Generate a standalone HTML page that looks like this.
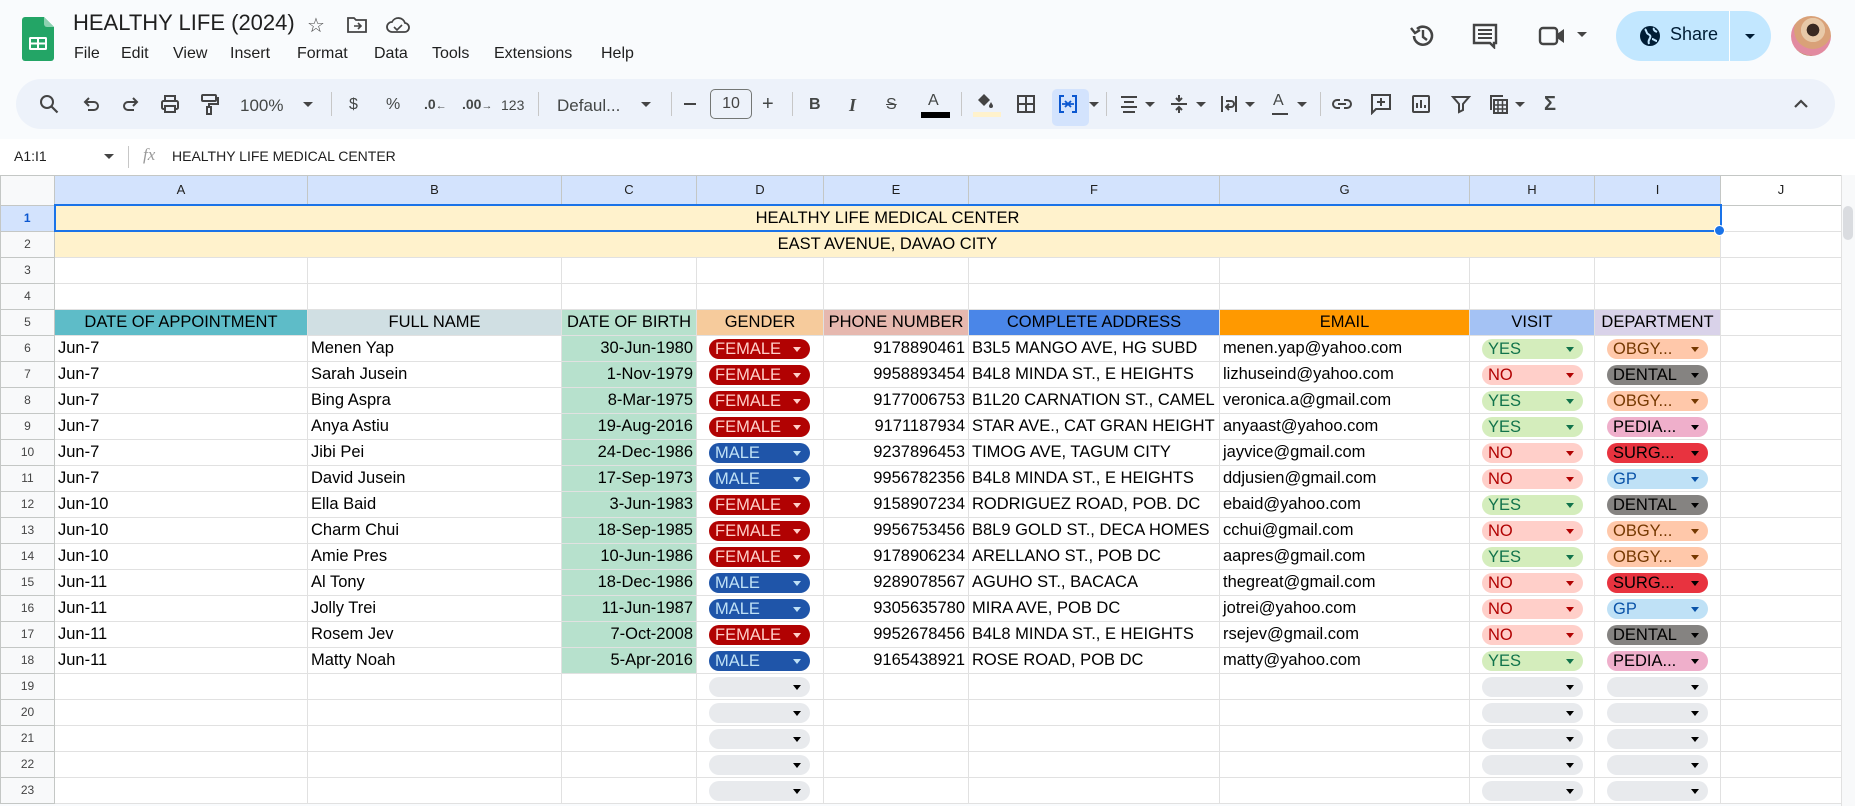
<!DOCTYPE html>
<html><head><meta charset="utf-8">
<style>
*{box-sizing:border-box;margin:0;padding:0}
body{width:1855px;height:806px;overflow:hidden;background:#f9fbfd;font-family:"Liberation Sans",Arial,sans-serif;position:relative;color:#1f1f1f}
.abs{position:absolute}
.title{left:73px;top:10px;font-size:22px;color:#1f1f1f}
.menu{top:45px;font-size:16px;color:#1f1f1f}
.tb{left:16px;top:79px;width:1819px;height:50px;background:#edf2fa;border-radius:25px}
.ti{position:absolute;top:93px;width:22px;height:22px}
.tt{position:absolute;top:94px;font-size:16px;color:#444746}
.sep{position:absolute;top:92px;width:1px;height:24px;background:#c7c7c7}
.fb{left:0;top:139px;width:1855px;height:36px;background:#fff}
table{position:absolute;left:0;top:175px;border-collapse:collapse;table-layout:fixed;background:#fff}
tr{height:26px}
td{border:1px solid #e1e1e1;height:26px;font-size:16.5px;padding:0 3px;white-space:nowrap;overflow:hidden;color:#000;line-height:25px}
tr.h{height:29px}
tr.h td{height:29px;line-height:28px;background:#d3e3fd;text-align:center;font-size:13px;color:#1f1f1f;border-color:#c4c7c5;padding:0}
tr.h td.rh{background:#f8f9fa}
tr.h td.jj{background:#fff}
td.rh{background:#f8f9fa;text-align:center;font-size:12px;color:#444;border-color:#c4c7c5;padding:0}
td.sel{background:#d3e3fd;color:#0b57d0;font-weight:bold}
td.r{text-align:right}
td.c{text-align:center}
td.g{background:#b7e1cd;text-align:right}
td.y{background:#fff2cc;text-align:center}
td.k{padding:0}
.ch{display:block;margin-left:12px;width:101px;height:20px;border-radius:10px;line-height:21px;font-size:16.5px;padding-left:6px;position:relative;overflow:hidden}
.ch:after{content:"";position:absolute;right:9px;top:8px;border-left:4px solid transparent;border-right:4px solid transparent;border-top:5px solid currentColor}
.F{background:#b10202;color:#ffcfc9}
.M{background:#1f55a9;color:#bfe1f6}
.Y{background:#d4edbc;color:#11734b}
.N{background:#ffcfc9;color:#b10202}
.O{background:#ffc8aa;color:#753800}
.D{background:#858381;color:#000}
.P{background:#efafcb;color:#000}
.S{background:#e8333f;color:#000}
.G{background:#bfe1f6;color:#0a53a8}
.E{background:#e8eaed;color:#000}
</style></head><body>

<svg class="abs" style="left:22px;top:17px" width="32" height="44" viewBox="0 0 32 44"><path d="M3 0h19l10 10v31a3 3 0 0 1-3 3H3a3 3 0 0 1-3-3V3a3 3 0 0 1 3-3z" fill="#23a566"/><path d="M22 0l10 10h-7a3 3 0 0 1-3-3z" fill="#8ed1b1"/><rect x="7" y="20" width="18" height="13" rx="1.5" fill="#fff"/><rect x="9" y="22" width="6" height="3.5" fill="#23a566"/><rect x="17" y="22" width="6" height="3.5" fill="#23a566"/><rect x="9" y="27.5" width="6" height="3.5" fill="#23a566"/><rect x="17" y="27.5" width="6" height="3.5" fill="#23a566"/></svg>
<div class="abs title">HEALTHY LIFE (2024)</div>
<div class="abs" style="left:307px;top:13px;font-size:20px;color:#444">☆</div>
<svg class="abs" style="left:346px;top:16px" width="22" height="18" viewBox="0 0 22 18"><path d="M2 2h6l2 2h10v12H2z" fill="none" stroke="#444" stroke-width="1.8"/><path d="M8 10h7M12 7l3 3-3 3" fill="none" stroke="#444" stroke-width="1.6"/></svg>
<svg class="abs" style="left:385px;top:15px" width="26" height="20" viewBox="0 0 26 20"><path d="M7 17a5 5 0 0 1 0-10 7 7 0 0 1 13 1 4.5 4.5 0 0 1-1 9z" fill="none" stroke="#444" stroke-width="1.8"/><path d="M9 12l3 3 5-5" fill="none" stroke="#444" stroke-width="1.6"/></svg>
<div class="abs menu" style="left:74px">File</div>
<div class="abs menu" style="left:121px">Edit</div>
<div class="abs menu" style="left:173px">View</div>
<div class="abs menu" style="left:230px">Insert</div>
<div class="abs menu" style="left:297px">Format</div>
<div class="abs menu" style="left:374px">Data</div>
<div class="abs menu" style="left:432px">Tools</div>
<div class="abs menu" style="left:494px">Extensions</div>
<div class="abs menu" style="left:601px">Help</div>

<svg class="abs" style="left:1409px;top:22px" width="28" height="28" viewBox="0 0 28 28"><path d="M5 14a9 9 0 1 0 3-7" fill="none" stroke="#444" stroke-width="2.6"/><path d="M2 6l4 5 5-3" fill="none" stroke="#444" stroke-width="2.4"/><path d="M14 8v7l4 3" fill="none" stroke="#444" stroke-width="2.4"/></svg>
<svg class="abs" style="left:1472px;top:23px" width="26" height="26" viewBox="0 0 26 26"><path d="M2 2h22v18h-2v4l-4-4H2z" fill="none" stroke="#444" stroke-width="2.4"/><path d="M6 7h14M6 11h14M6 15h14" stroke="#444" stroke-width="2"/></svg>
<svg class="abs" style="left:1538px;top:25px" width="28" height="22" viewBox="0 0 28 22"><rect x="2" y="3" width="17" height="16" rx="3" fill="none" stroke="#444" stroke-width="2.4"/><path d="M19 9l7-5v14l-7-5z" fill="#444"/></svg>
<div class="abs" style="left:1577px;top:32px;border-left:5px solid transparent;border-right:5px solid transparent;border-top:5px solid #444"></div>
<div class="abs" style="left:1616px;top:11px;width:155px;height:50px;border-radius:25px;background:#c2e7ff"></div>
<div class="abs" style="left:1729px;top:11px;width:1px;height:50px;background:#fff"></div>
<svg class="abs" style="left:1639px;top:25px" width="22" height="22" viewBox="0 0 22 22"><circle cx="11" cy="11" r="10" fill="#001d35"/><path d="M6 4c2 2 1 4 3 5s3 2 2 4-2 3-1 6M15 3c-1 2 1 3 3 4M13 14c2 0 3 2 5 2" fill="none" stroke="#c2e7ff" stroke-width="2"/></svg>
<div class="abs" style="left:1670px;top:24px;font-size:18px;color:#001d35">Share</div>
<div class="abs" style="left:1745px;top:34px;border-left:5px solid transparent;border-right:5px solid transparent;border-top:5px solid #001d35"></div>
<div class="abs" style="left:1791px;top:16px;width:40px;height:40px;border-radius:50%;background:radial-gradient(circle at 55% 35%,#3a2a22 0 18%,#e8c9a8 19% 35%,#d9a178 36% 55%,#e28aa0 56% 75%,#b88a5a 76%)"></div>

<div class="abs tb"></div>
<svg class="ti" style="left:38px" viewBox="0 0 22 22"><circle cx="9" cy="9" r="6" fill="none" stroke="#444" stroke-width="2"/><path d="M13.5 13.5l6 6" stroke="#444" stroke-width="2.2"/></svg>
<svg class="ti" style="left:80px" viewBox="0 0 22 22"><path d="M6 9h8a4 4 0 0 1 0 8H8M9 5L5 9l4 4" fill="none" stroke="#444" stroke-width="2"/></svg>
<svg class="ti" style="left:120px" viewBox="0 0 22 22"><path d="M16 9H8a4 4 0 0 0 0 8h6M13 5l4 4-4 4" fill="none" stroke="#444" stroke-width="2"/></svg>
<svg class="ti" style="left:159px" viewBox="0 0 22 22"><rect x="3" y="8" width="16" height="8" rx="1.5" fill="none" stroke="#444" stroke-width="2"/><rect x="6" y="3" width="10" height="5" fill="none" stroke="#444" stroke-width="2"/><rect x="6" y="13" width="10" height="6" fill="#edf2fa" stroke="#444" stroke-width="2"/></svg>
<svg class="ti" style="left:198px" viewBox="0 0 22 22"><rect x="4" y="2" width="14" height="6" rx="1" fill="none" stroke="#444" stroke-width="2"/><path d="M18 5h2v6h-9v3" fill="none" stroke="#444" stroke-width="2"/><rect x="9" y="14" width="4" height="7" fill="none" stroke="#444" stroke-width="2"/></svg>
<div class="tt" style="left:240px;top:96px;font-size:17px">100%</div>
<div class="abs" style="left:303px;top:102px;border-left:5px solid transparent;border-right:5px solid transparent;border-top:5px solid #444"></div>
<div class="sep" style="left:331px"></div>
<div class="tt" style="left:349px;top:96px">$</div>
<div class="tt" style="left:386px;top:96px">%</div>
<div class="tt" style="left:424px;font-size:14px;font-weight:bold;top:96px">.0<span style="font-size:11px">←</span></div>
<div class="tt" style="left:462px;font-size:14px;font-weight:bold;top:96px">.00<span style="font-size:11px">→</span></div>
<div class="tt" style="left:501px;font-size:14px;top:97px">123</div>
<div class="sep" style="left:538px"></div>
<div class="tt" style="left:557px;top:96px;font-size:17px">Defaul...</div>
<div class="abs" style="left:641px;top:102px;border-left:5px solid transparent;border-right:5px solid transparent;border-top:5px solid #444"></div>
<div class="sep" style="left:671px"></div>
<div class="abs" style="left:684px;top:103px;width:12px;height:2px;background:#444"></div>
<div class="abs" style="left:710px;top:89px;width:42px;height:30px;border:1px solid #747775;border-radius:5px;font-size:16px;text-align:center;line-height:28px;color:#444">10</div>
<div class="tt" style="left:762px;font-size:20px;top:93px">+</div>
<div class="sep" style="left:792px"></div>
<div class="tt" style="left:809px;font-weight:bold;top:96px">B</div>
<div class="tt" style="left:849px;font-style:italic;font-family:'Liberation Serif',serif;font-weight:bold;font-size:18px;top:95px">I</div>
<div class="tt" style="left:886px;text-decoration:line-through;top:96px">S</div>
<div class="tt" style="left:928px;top:92px">A</div>
<div class="abs" style="left:921px;top:112px;width:29px;height:6px;background:#000"></div>
<div class="sep" style="left:961px"></div>
<svg class="ti" style="left:974px;top:90px" viewBox="0 0 22 22"><path d="M4 10l6-6 6 6-6 6z" fill="#444"/><path d="M17 12c1 2 2 3 2 4a2 2 0 0 1-4 0c0-1 1-2 2-4z" fill="#444"/></svg>
<div class="abs" style="left:973px;top:112px;width:28px;height:5px;background:#fff2cc"></div>
<svg class="ti" style="left:1015px" viewBox="0 0 22 22"><rect x="3" y="3" width="16" height="16" fill="none" stroke="#444" stroke-width="2"/><path d="M11 3v16M3 11h16" stroke="#444" stroke-width="2"/></svg>
<div class="abs" style="left:1052px;top:89px;width:37px;height:37px;border-radius:5px;background:#d3e3fd"></div>
<svg class="ti" style="left:1057px" viewBox="0 0 22 22"><path d="M7 3H3v16h4M15 3h4v16h-4" fill="none" stroke="#0b57d0" stroke-width="2"/><path d="M5 11h5M8 8l3 3-3 3M17 11h-5M14 8l-3 3 3 3" fill="none" stroke="#0b57d0" stroke-width="1.8"/></svg>
<div class="abs" style="left:1089px;top:102px;border-left:5px solid transparent;border-right:5px solid transparent;border-top:5px solid #444"></div>
<div class="sep" style="left:1106px"></div>
<svg class="ti" style="left:1118px" viewBox="0 0 22 22"><path d="M3 4h16M6 9h10M3 14h16M5 19h12" stroke="#444" stroke-width="2"/></svg>
<div class="abs" style="left:1145px;top:102px;border-left:5px solid transparent;border-right:5px solid transparent;border-top:5px solid #444"></div>
<svg class="ti" style="left:1168px" viewBox="0 0 22 22"><path d="M3 11h16M11 2v6M8 5l3 3 3-3M11 20v-6M8 17l3-3 3 3" fill="none" stroke="#444" stroke-width="2"/></svg>
<div class="abs" style="left:1196px;top:102px;border-left:5px solid transparent;border-right:5px solid transparent;border-top:5px solid #444"></div>
<svg class="ti" style="left:1218px" viewBox="0 0 22 22"><path d="M4 3v16M18 3v16M8 8h5a3 3 0 0 1 0 6H9M11 11l-3 3 3 3" fill="none" stroke="#444" stroke-width="2"/></svg>
<div class="abs" style="left:1245px;top:102px;border-left:5px solid transparent;border-right:5px solid transparent;border-top:5px solid #444"></div>
<div class="tt" style="left:1273px;top:92px">A</div>
<div class="abs" style="left:1272px;top:113px;width:16px;height:2px;background:#444"></div>
<div class="abs" style="left:1297px;top:102px;border-left:5px solid transparent;border-right:5px solid transparent;border-top:5px solid #444"></div>
<div class="sep" style="left:1320px"></div>
<svg class="ti" style="left:1331px" viewBox="0 0 22 22"><path d="M9 7H6a4 4 0 0 0 0 8h3M13 7h3a4 4 0 0 1 0 8h-3M7 11h8" fill="none" stroke="#444" stroke-width="2"/></svg>
<svg class="ti" style="left:1370px" viewBox="0 0 22 22"><path d="M2 2h18v14H6l-4 4z" fill="none" stroke="#444" stroke-width="2"/><path d="M11 5v8M7 9h8" stroke="#444" stroke-width="2"/></svg>
<svg class="ti" style="left:1410px" viewBox="0 0 22 22"><rect x="3" y="3" width="16" height="16" rx="1" fill="none" stroke="#444" stroke-width="2"/><path d="M7 15V10M11 15V7M15 15v-3" stroke="#444" stroke-width="2"/></svg>
<svg class="ti" style="left:1450px" viewBox="0 0 22 22"><path d="M3 4h16l-6 7v6l-4 2v-8z" fill="none" stroke="#444" stroke-width="2"/></svg>
<svg class="ti" style="left:1487px" viewBox="0 0 22 22"><path d="M4 17V3h12" fill="none" stroke="#444" stroke-width="2"/><rect x="7" y="7" width="13" height="13" fill="none" stroke="#444" stroke-width="2"/><path d="M7 12h13M7 16h13M11 7v13M15.5 7v13" stroke="#444" stroke-width="1.5"/></svg>
<div class="abs" style="left:1515px;top:102px;border-left:5px solid transparent;border-right:5px solid transparent;border-top:5px solid #444"></div>
<div class="tt" style="left:1544px;font-size:20px;top:93px;font-weight:bold">Σ</div>
<svg class="ti" style="left:1790px" viewBox="0 0 22 22"><path d="M5 14l6-6 6 6" fill="none" stroke="#444" stroke-width="2.2"/></svg>

<div class="abs fb"></div>
<div class="abs" style="left:14px;top:148px;font-size:14px;color:#1f1f1f">A1:I1</div>
<div class="abs" style="left:104px;top:154px;border-left:5px solid transparent;border-right:5px solid transparent;border-top:5px solid #444"></div>
<div class="abs" style="left:128px;top:146px;width:1px;height:22px;background:#c7c7c7"></div>
<div class="abs" style="left:143px;top:145px;font-size:17px;color:#999;font-style:italic;font-family:'Liberation Serif',serif">fx</div>
<div class="abs" style="left:172px;top:148px;font-size:14px;color:#1f1f1f">HEALTHY LIFE MEDICAL CENTER</div>

<table>
<colgroup><col style="width:54px"><col style="width:253px"><col style="width:254px"><col style="width:135px"><col style="width:127px"><col style="width:145px"><col style="width:251px"><col style="width:250px"><col style="width:125px"><col style="width:126px"><col style="width:121px"></colgroup>
<tr class="h"><td class="rh"></td><td>A</td><td>B</td><td>C</td><td>D</td><td>E</td><td>F</td><td>G</td><td>H</td><td>I</td><td class="jj">J</td></tr>
<tr><td class="rh sel">1</td><td class="y" colspan="9" style="border:2px solid #1a73e8;line-height:23px">HEALTHY LIFE MEDICAL CENTER</td><td></td></tr>
<tr><td class="rh">2</td><td class="y" colspan="9">EAST AVENUE, DAVAO CITY</td><td></td></tr>
<tr><td class="rh">3</td><td></td><td></td><td></td><td></td><td></td><td></td><td></td><td></td><td></td><td></td></tr>
<tr><td class="rh">4</td><td></td><td></td><td></td><td></td><td></td><td></td><td></td><td></td><td></td><td></td></tr>
<tr><td class="rh">5</td><td class="c" style="background:#5ebcc8">DATE OF APPOINTMENT</td><td class="c" style="background:#d0dfe3">FULL NAME</td><td class="c" style="background:#b7e1cd">DATE OF BIRTH</td><td class="c" style="background:#f6cb9c">GENDER</td><td class="c" style="background:#e6b8af">PHONE NUMBER</td><td class="c" style="background:#4a86e8">COMPLETE ADDRESS</td><td class="c" style="background:#ff9900">EMAIL</td><td class="c" style="background:#a4c2f4">VISIT</td><td class="c" style="background:#d9d2e9">DEPARTMENT</td><td></td></tr>
<tr><td class="rh">6</td><td>Jun-7</td><td>Menen Yap</td><td class="g">30-Jun-1980</td><td class="k"><span class="ch F">FEMALE</span></td><td class="r">9178890461</td><td>B3L5 MANGO AVE, HG SUBD</td><td>menen.yap@yahoo.com</td><td class="k"><span class="ch Y">YES</span></td><td class="k"><span class="ch O">OBGY...</span></td><td></td></tr>
<tr><td class="rh">7</td><td>Jun-7</td><td>Sarah Jusein</td><td class="g">1-Nov-1979</td><td class="k"><span class="ch F">FEMALE</span></td><td class="r">9958893454</td><td>B4L8 MINDA ST., E HEIGHTS</td><td>lizhuseind@yahoo.com</td><td class="k"><span class="ch N">NO</span></td><td class="k"><span class="ch D">DENTAL</span></td><td></td></tr>
<tr><td class="rh">8</td><td>Jun-7</td><td>Bing Aspra</td><td class="g">8-Mar-1975</td><td class="k"><span class="ch F">FEMALE</span></td><td class="r">9177006753</td><td>B1L20 CARNATION ST., CAMEL</td><td>veronica.a@gmail.com</td><td class="k"><span class="ch Y">YES</span></td><td class="k"><span class="ch O">OBGY...</span></td><td></td></tr>
<tr><td class="rh">9</td><td>Jun-7</td><td>Anya Astiu</td><td class="g">19-Aug-2016</td><td class="k"><span class="ch F">FEMALE</span></td><td class="r">9171187934</td><td>STAR AVE., CAT GRAN HEIGHT</td><td>anyaast@yahoo.com</td><td class="k"><span class="ch Y">YES</span></td><td class="k"><span class="ch P">PEDIA...</span></td><td></td></tr>
<tr><td class="rh">10</td><td>Jun-7</td><td>Jibi Pei</td><td class="g">24-Dec-1986</td><td class="k"><span class="ch M">MALE</span></td><td class="r">9237896453</td><td>TIMOG AVE, TAGUM CITY</td><td>jayvice@gmail.com</td><td class="k"><span class="ch N">NO</span></td><td class="k"><span class="ch S">SURG...</span></td><td></td></tr>
<tr><td class="rh">11</td><td>Jun-7</td><td>David Jusein</td><td class="g">17-Sep-1973</td><td class="k"><span class="ch M">MALE</span></td><td class="r">9956782356</td><td>B4L8 MINDA ST., E HEIGHTS</td><td>ddjusien@gmail.com</td><td class="k"><span class="ch N">NO</span></td><td class="k"><span class="ch G">GP</span></td><td></td></tr>
<tr><td class="rh">12</td><td>Jun-10</td><td>Ella Baid</td><td class="g">3-Jun-1983</td><td class="k"><span class="ch F">FEMALE</span></td><td class="r">9158907234</td><td>RODRIGUEZ ROAD, POB. DC</td><td>ebaid@yahoo.com</td><td class="k"><span class="ch Y">YES</span></td><td class="k"><span class="ch D">DENTAL</span></td><td></td></tr>
<tr><td class="rh">13</td><td>Jun-10</td><td>Charm Chui</td><td class="g">18-Sep-1985</td><td class="k"><span class="ch F">FEMALE</span></td><td class="r">9956753456</td><td>B8L9 GOLD ST., DECA HOMES</td><td>cchui@gmail.com</td><td class="k"><span class="ch N">NO</span></td><td class="k"><span class="ch O">OBGY...</span></td><td></td></tr>
<tr><td class="rh">14</td><td>Jun-10</td><td>Amie Pres</td><td class="g">10-Jun-1986</td><td class="k"><span class="ch F">FEMALE</span></td><td class="r">9178906234</td><td>ARELLANO ST., POB DC</td><td>aapres@gmail.com</td><td class="k"><span class="ch Y">YES</span></td><td class="k"><span class="ch O">OBGY...</span></td><td></td></tr>
<tr><td class="rh">15</td><td>Jun-11</td><td>Al Tony</td><td class="g">18-Dec-1986</td><td class="k"><span class="ch M">MALE</span></td><td class="r">9289078567</td><td>AGUHO ST., BACACA</td><td>thegreat@gmail.com</td><td class="k"><span class="ch N">NO</span></td><td class="k"><span class="ch S">SURG...</span></td><td></td></tr>
<tr><td class="rh">16</td><td>Jun-11</td><td>Jolly Trei</td><td class="g">11-Jun-1987</td><td class="k"><span class="ch M">MALE</span></td><td class="r">9305635780</td><td>MIRA AVE, POB DC</td><td>jotrei@yahoo.com</td><td class="k"><span class="ch N">NO</span></td><td class="k"><span class="ch G">GP</span></td><td></td></tr>
<tr><td class="rh">17</td><td>Jun-11</td><td>Rosem Jev</td><td class="g">7-Oct-2008</td><td class="k"><span class="ch F">FEMALE</span></td><td class="r">9952678456</td><td>B4L8 MINDA ST., E HEIGHTS</td><td>rsejev@gmail.com</td><td class="k"><span class="ch N">NO</span></td><td class="k"><span class="ch D">DENTAL</span></td><td></td></tr>
<tr><td class="rh">18</td><td>Jun-11</td><td>Matty Noah</td><td class="g">5-Apr-2016</td><td class="k"><span class="ch M">MALE</span></td><td class="r">9165438921</td><td>ROSE ROAD, POB DC</td><td>matty@yahoo.com</td><td class="k"><span class="ch Y">YES</span></td><td class="k"><span class="ch P">PEDIA...</span></td><td></td></tr>
<tr><td class="rh">19</td><td></td><td></td><td></td><td class="k"><span class="ch E"></span></td><td></td><td></td><td></td><td class="k"><span class="ch E"></span></td><td class="k"><span class="ch E"></span></td><td></td></tr>
<tr><td class="rh">20</td><td></td><td></td><td></td><td class="k"><span class="ch E"></span></td><td></td><td></td><td></td><td class="k"><span class="ch E"></span></td><td class="k"><span class="ch E"></span></td><td></td></tr>
<tr><td class="rh">21</td><td></td><td></td><td></td><td class="k"><span class="ch E"></span></td><td></td><td></td><td></td><td class="k"><span class="ch E"></span></td><td class="k"><span class="ch E"></span></td><td></td></tr>
<tr><td class="rh">22</td><td></td><td></td><td></td><td class="k"><span class="ch E"></span></td><td></td><td></td><td></td><td class="k"><span class="ch E"></span></td><td class="k"><span class="ch E"></span></td><td></td></tr>
<tr><td class="rh">23</td><td></td><td></td><td></td><td class="k"><span class="ch E"></span></td><td></td><td></td><td></td><td class="k"><span class="ch E"></span></td><td class="k"><span class="ch E"></span></td><td></td></tr>
</table>
<div class="abs" style="left:1714px;top:225px;width:11px;height:11px;border-radius:50%;background:#1a73e8;border:1px solid #fff"></div>
<div class="abs" style="left:1841px;top:175px;width:14px;height:631px;background:#f8f9fa;border-left:1px solid #e1e1e1"></div>
<div class="abs" style="left:1843px;top:206px;width:10px;height:34px;border-radius:5px;background:#dadce0"></div>
</body></html>
